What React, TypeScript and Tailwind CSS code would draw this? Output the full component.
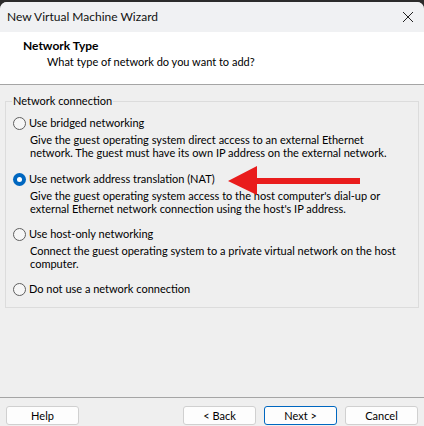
const ff = "font-['Lato','Noto_Sans',sans-serif]";

function Radio({ checked }: { checked?: boolean }) {
  if (checked) {
    return (
      <span className="flex h-[13px] w-[13px] shrink-0 items-center justify-center rounded-full bg-[#0067c0]">
        <span className="h-[5px] w-[5px] rounded-full bg-white" />
      </span>
    );
  }
  return <span className="h-[13px] w-[13px] shrink-0 rounded-full border border-[#5f5f5f] bg-[#f6f6f6]" />;
}

function Option({ label, checked, lines, className }: { label: string; checked?: boolean; lines?: string[]; className?: string }) {
  return (
    <div className={className}>
      <div className="flex h-[16px] items-center gap-[3px]">
        <Radio checked={checked} />
        <span>{label}</span>
      </div>
      {lines && (
        <div className="mt-[2px] pl-[17px] leading-[13px]">
          {lines.map((l) => (
            <div key={l} className="whitespace-nowrap">{l}</div>
          ))}
        </div>
      )}
    </div>
  );
}

function WizButton({ children, primary }: { children: string; primary?: boolean }) {
  return (
    <button className={`h-[19px] w-[73px] rounded-[3px] border bg-[#fdfdfd] text-[11px] leading-none text-black ${primary ? 'border-[#0067c0]' : 'border-[#d0d0d0]'}`}>
      {children}
    </button>
  );
}

export default function App() {
  return (
    <div className={`flex h-[426px] w-[424px] flex-col overflow-hidden bg-[#2b2b2b] pt-[2px] text-[11px] text-black ${ff}`}>
      <div className="flex flex-1 flex-col overflow-hidden rounded-t-[7px] bg-[#efefef]">
        <div className="flex h-[30px] items-center justify-between bg-[#f0f1f3] pl-[7px] pr-[11px]">
          <span className="text-[12px] text-[#111]">New Virtual Machine Wizard</span>
          <svg width="10" height="10" viewBox="0 0 10 10" fill="none" stroke="#222" strokeWidth="1">
            <path d="M0 0 10 10M10 0 0 10" />
          </svg>
        </div>
        <div className="h-[53px] border-b border-[#a5a5a5] bg-white pl-[23px] pt-[6px] leading-[16px]">
          <div className="text-[12px] font-bold text-black">Network Type</div>
          <div className="pl-[24px]">What type of network do you want to add?</div>
        </div>
        <div className="flex-1 px-[5px] pt-[9px]">
          <fieldset className="h-[214px] border border-[#dcdcdc] pl-[7px] pr-[4px]">
            <legend className="-ml-[1px] px-[1px] leading-[14px]">Network connection</legend>
            <Option
              className="mt-[7px]"
              label="Use bridged networking"
              lines={[
                'Give the guest operating system direct access to an external Ethernet',
                'network. The guest must have its own IP address on the external network.',
              ]}
            />
            <Option
              className="mt-[12px]"
              checked
              label="Use network address translation (NAT)"
              lines={[
                "Give the guest operating system access to the host computer's dial-up or",
                "external Ethernet network connection using the host's IP address.",
              ]}
            />
            <Option
              className="mt-[11px]"
              label="Use host-only networking"
              lines={[
                'Connect the guest operating system to a private virtual network on the host',
                'computer.',
              ]}
            />
            <Option className="mt-[11px]" label="Do not use a network connection" />
          </fieldset>
        </div>
        <div className="flex h-[29px] items-start justify-between border-t border-[#a5a5a5] px-[6px] pt-[8px]">
          <WizButton>Help</WizButton>
          <div className="flex gap-[8px]">
            <WizButton>{'< Back'}</WizButton>
            <WizButton primary>{'Next >'}</WizButton>
            <WizButton>Cancel</WizButton>
          </div>
        </div>
      </div>
      {/* red arrow pasted over the screenshot */}
      <svg className="absolute left-[226px] top-[165px]" width="136" height="31" viewBox="0 0 136 31">
        <path d="M2 16 31 1V13H134V19H31V30Z" fill="#e91c1c" />
      </svg>
    </div>
  );
}
